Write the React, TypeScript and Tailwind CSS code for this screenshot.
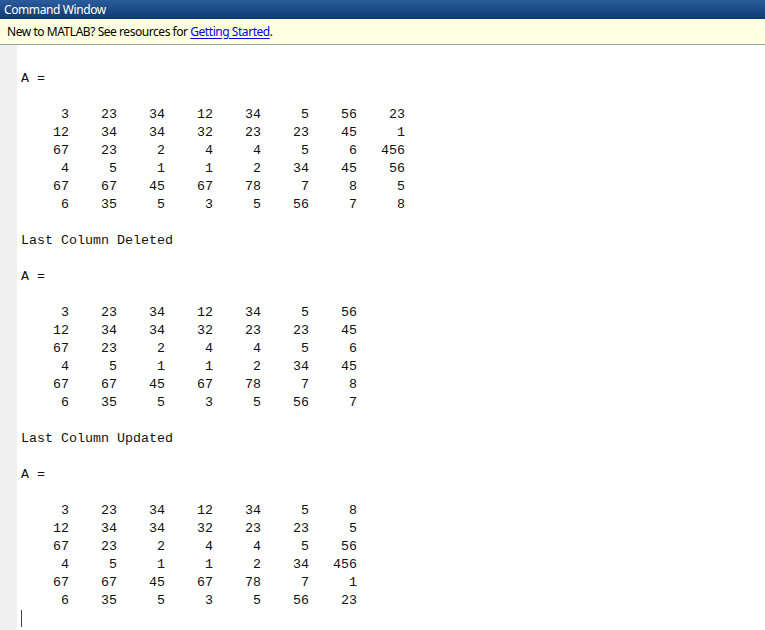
import React from 'react';

const matA = [
  [3, 23, 34, 12, 34, 5, 56, 23],
  [12, 34, 34, 32, 23, 23, 45, 1],
  [67, 23, 2, 4, 4, 5, 6, 456],
  [4, 5, 1, 1, 2, 34, 45, 56],
  [67, 67, 45, 67, 78, 7, 8, 5],
  [6, 35, 5, 3, 5, 56, 7, 8],
];

const deleted = matA.map(r => r.slice(0, 7));
const updated = matA.map((r, i) => [...r.slice(0, 6), [8, 5, 56, 456, 1, 23][i]]);

// MATLAB prints integer matrices with 6-char wide right-aligned columns
const fmt = (m: number[][]) => m.map(r => r.map(v => String(v).padStart(6, ' ')).join('')).join('\n');

const output = [
  '',
  'A =',
  '',
  fmt(matA),
  '',
  'Last Column Deleted',
  '',
  'A =',
  '',
  fmt(deleted),
  '',
  'Last Column Updated',
  '',
  'A =',
  '',
  fmt(updated),
].join('\n');

const uiFont = { fontFamily: '"Noto Sans", "Open Sans", sans-serif' };

export default function App() {
  return (
    <div className="w-[765px] h-[630px] flex flex-col bg-white overflow-hidden">
      <div className="h-[19px] shrink-0 flex items-center px-[4px] bg-gradient-to-b from-[#2b5c9c] to-[#0e3b76] text-white text-[12px] tracking-[-0.4px] leading-none" style={uiFont}>
        Command Window
      </div>
      <div className="h-[26px] shrink-0 flex items-center px-[7px] bg-[#ffffe1] border-b border-[#a0a0a0] text-black text-[12px] tracking-[-0.45px]" style={uiFont}>
        <span>
          New to MATLAB? See resources for{' '}
          <span className="text-[#0000ee] underline underline-offset-2">Getting Started</span>.
        </span>
      </div>
      <div className="flex flex-1 min-h-0">
        <div className="w-[17px] shrink-0 bg-[#f0f0f0]" />
        <div className="flex-1 pt-[7px] pl-[4px]">
          <pre
            className="m-0 text-[13.333px] leading-[18px] text-[#111] whitespace-pre"
            style={{ fontFamily: '"Liberation Mono", "Courier New", monospace' }}
          >
            {output}
            {'\n'}
            <span className="inline-block w-px h-[17px] bg-[#444] align-[-4px]" />
          </pre>
        </div>
      </div>
    </div>
  );
}
